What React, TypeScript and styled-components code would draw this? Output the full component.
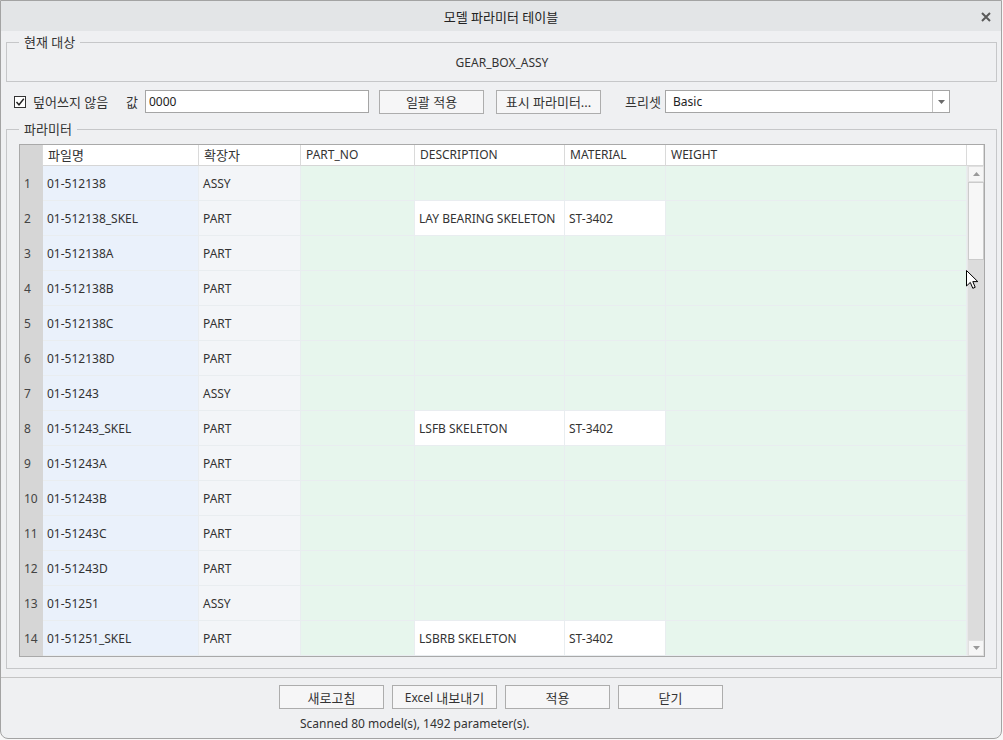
import styled, { createGlobalStyle } from 'styled-components'

const GlobalStyle = createGlobalStyle`
  html, body {
    margin: 0;
    padding: 0;
    background: #f7f7f7;
  }
  body {
    font-family: "Noto Sans", "Noto Sans CJK KR", sans-serif;
    font-size: 12px;
    color: #333;
  }
  * { box-sizing: border-box; }
`

type Tone = 'num' | 'name' | 'ext' | 'param' | 'filled'

interface Row {
  name: string
  ext: string
  desc?: string
  material?: string
}

const rows: Row[] = [
  { name: '01-512138', ext: 'ASSY' },
  { name: '01-512138_SKEL', ext: 'PART', desc: 'LAY BEARING SKELETON', material: 'ST-3402' },
  { name: '01-512138A', ext: 'PART' },
  { name: '01-512138B', ext: 'PART' },
  { name: '01-512138C', ext: 'PART' },
  { name: '01-512138D', ext: 'PART' },
  { name: '01-51243', ext: 'ASSY' },
  { name: '01-51243_SKEL', ext: 'PART', desc: 'LSFB SKELETON', material: 'ST-3402' },
  { name: '01-51243A', ext: 'PART' },
  { name: '01-51243B', ext: 'PART' },
  { name: '01-51243C', ext: 'PART' },
  { name: '01-51243D', ext: 'PART' },
  { name: '01-51251', ext: 'ASSY' },
  { name: '01-51251_SKEL', ext: 'PART', desc: 'LSBRB SKELETON', material: 'ST-3402' },
]

const headers = ['', '파일명', '확장자', 'PART_NO', 'DESCRIPTION', 'MATERIAL', 'WEIGHT', '']
const koreanHeader = /[가-힣]/

function App () {
  return (
    <>
      <GlobalStyle />
      <Window>
        <TitleBar>
          <Title>모델 파라미터 테이블</Title>
          <CloseButton>
            <svg width="10" height="10" viewBox="0 0 10 10">
              <path d="M1 1 L9 9 M9 1 L1 9" stroke="#5a5a5a" strokeWidth="2" />
            </svg>
          </CloseButton>
        </TitleBar>

        <Body>
          <Group>
            <Legend>현재 대상</Legend>
            <TargetName>GEAR_BOX_ASSY</TargetName>
          </Group>

          <Options>
            <CheckLabel>
              <CheckBox>
                <svg width="10" height="10" viewBox="0 0 10 10">
                  <path d="M1.5 5 L4 7.8 L8.8 1.8" stroke="#222" strokeWidth="1.4" fill="none" />
                </svg>
              </CheckBox>
              <Ko>덮어쓰지 않음</Ko>
            </CheckLabel>
            <FieldLabel $width={19}>값</FieldLabel>
            <TextInput $width={224}>0000</TextInput>
            <Button $width={105} $gap={10}><Ko>일괄 적용</Ko></Button>
            <Button $width={105} $gap={12}><Ko>표시 파라미터...</Ko></Button>
            <FieldLabel $width={40} $gap={24}>프리셋</FieldLabel>
            <Select>
              <SelectValue>Basic</SelectValue>
              <SelectArrow>
                <svg width="7" height="4" viewBox="0 0 7 4">
                  <path d="M0 0 L7 0 L3.5 4 Z" fill="#6a6a6a" />
                </svg>
              </SelectArrow>
            </Select>
          </Options>

          <Group $grow>
            <Legend>파라미터</Legend>
            <TableFrame>
              {headers.map((h, i) => (
                <HeadCell key={'h' + i} $corner={i === 0}>
                  {koreanHeader.test(h) ? <Ko>{h}</Ko> : h}
                </HeadCell>
              ))}
              <ScrollBar>
                <ScrollButton>
                  <svg width="7" height="4" viewBox="0 0 7 4">
                    <path d="M0 4 L7 4 L3.5 0 Z" fill="#9a9a9a" />
                  </svg>
                </ScrollButton>
                <Thumb />
                <Track />
                <ScrollButton>
                  <svg width="7" height="4" viewBox="0 0 7 4">
                    <path d="M0 0 L7 0 L3.5 4 Z" fill="#9a9a9a" />
                  </svg>
                </ScrollButton>
              </ScrollBar>
              {rows.map((r, i) => (
                <RowCells key={r.name} index={i + 1} row={r} />
              ))}
            </TableFrame>
          </Group>
        </Body>

        <Footer>
          <ButtonRow>
            <Button $width={105}><Ko>새로고침</Ko></Button>
            <Button $width={105}>Excel&nbsp;<Ko>내보내기</Ko></Button>
            <Button $width={105}><Ko>적용</Ko></Button>
            <Button $width={105}><Ko>닫기</Ko></Button>
          </ButtonRow>
          <Status>Scanned 80 model(s), 1492 parameter(s).</Status>
        </Footer>

        <Cursor width="13" height="20" viewBox="0 0 13 20">
          <path d="M0.5 0.5 L0.5 16 L4.3 12.4 L6.8 18.3 L9.2 17.3 L6.8 11.6 L11.8 11.6 Z" fill="#fff" stroke="#000" strokeWidth="1" strokeLinejoin="round" />
        </Cursor>
      </Window>
    </>
  )
}

function RowCells ({ index, row }: { index: number, row: Row }) {
  return (
    <>
      <Cell $tone="num">{index}</Cell>
      <Cell $tone="name">{row.name}</Cell>
      <Cell $tone="ext">{row.ext}</Cell>
      <Cell $tone="param" />
      <Cell $tone={row.desc ? 'filled' : 'param'}>{row.desc}</Cell>
      <Cell $tone={row.material ? 'filled' : 'param'}>{row.material}</Cell>
      <Cell $tone="param" />
    </>
  )
}

const toneBg: Record<Tone, string> = {
  num: '#d6d6d6',
  name: '#eaf1fb',
  ext: '#f3f5f8',
  param: '#e7f6ed',
  filled: '#ffffff',
}

const Ko = styled.span`
  font-size: 13px;
`

const Window = styled.div`
  position: relative;
  width: 1002px;
  height: 739px;
  background: #eff0f2;
  border: 1px solid #a3a3a3;
  border-radius: 0 0 8px 8px;
  display: flex;
  flex-direction: column;
  overflow: hidden;
`

const TitleBar = styled.div`
  height: 30px;
  flex: none;
  background: #e3e5e7;
  display: flex;
  align-items: center;
  justify-content: center;
  position: relative;
`

const Title = styled.div`
  font-size: 13px;
  color: #222;
`

const CloseButton = styled.div`
  position: absolute;
  right: 10px;
  top: 11px;
  display: flex;
`

const Body = styled.div`
  flex: 1;
  display: flex;
  flex-direction: column;
  padding: 3px 4px 0 5px;
  min-height: 0;
`

const Group = styled.fieldset<{ $grow?: boolean }>`
  margin: 0;
  padding: 0 11px 0 12px;
  border: 1px solid #c6c7c9;
  min-width: 0;
  ${p => p.$grow ? 'flex: 1; margin-top: 8px; padding-top: 7px; padding-bottom: 11px;' : ''}
`

const Legend = styled.legend`
  margin-left: 0;
  padding: 0 5px;
  font-size: 13px;
  line-height: 16px;
  color: #333;
`

const TargetName = styled.div`
  text-align: center;
  line-height: 18px;
  padding: 4px 0 9px;
  color: #333;
`

const Options = styled.div`
  display: flex;
  align-items: center;
  height: 23px;
  margin-top: 8px;
  padding-left: 8px;
`

const CheckLabel = styled.div`
  width: 112px;
  display: flex;
  align-items: center;
  gap: 7px;
  color: #333;
`

const CheckBox = styled.span`
  width: 12px;
  height: 12px;
  flex: none;
  border: 1px solid #333;
  background: #fff;
  display: flex;
  align-items: center;
  justify-content: center;
`

const FieldLabel = styled.span<{ $width: number, $gap?: number }>`
  width: ${p => p.$width}px;
  flex: none;
  margin-left: ${p => p.$gap ?? 0}px;
  font-size: 13px;
  color: #333;
  white-space: nowrap;
`

const TextInput = styled.div<{ $width: number }>`
  width: ${p => p.$width}px;
  height: 23px;
  background: #fff;
  border: 1px solid #a5a5a5;
  padding-left: 3px;
  line-height: 21px;
  color: #222;
`

const Button = styled.div<{ $width: number, $gap?: number }>`
  width: ${p => p.$width}px;
  height: 24px;
  margin-left: ${p => p.$gap ?? 0}px;
  background: #f6f6f7;
  border: 1px solid #adadad;
  display: flex;
  align-items: center;
  justify-content: center;
  color: #333;
  white-space: nowrap;
`

const Select = styled.div`
  width: 285px;
  height: 23px;
  background: #fff;
  border: 1px solid #a5a5a5;
  display: flex;
`

const SelectValue = styled.div`
  flex: 1;
  padding-left: 7px;
  line-height: 21px;
  color: #222;
`

const SelectArrow = styled.div`
  width: 17px;
  border-left: 1px solid #c3c3c3;
  display: flex;
  align-items: center;
  justify-content: center;
`

const TableFrame = styled.div`
  display: grid;
  grid-template-columns: 23px 156px 102px 114px 150px 101px 301px 17px;
  grid-template-rows: 21px repeat(14, 35px);
  border: 1px solid #a9a9a9;
  background: #fff;
`

const HeadCell = styled.div<{ $corner?: boolean }>`
  background: ${p => p.$corner ? '#d6d6d6' : '#fff'};
  border-right: 1px solid #dadada;
  border-bottom: 1px solid #d6d6d6;
  padding-left: 5px;
  line-height: 20px;
  color: #333;
  white-space: nowrap;
`

const Cell = styled.div<{ $tone: Tone }>`
  background: ${p => toneBg[p.$tone]};
  border-right: 1px solid ${p => p.$tone === 'num' ? '#d6d6d6' : '#e9edf0'};
  border-bottom: 1px solid ${p => p.$tone === 'num' ? '#d6d6d6' : '#e9edf0'};
  padding-left: 4px;
  display: flex;
  align-items: center;
  color: ${p => p.$tone === 'num' ? '#444' : '#333'};
  white-space: nowrap;
`

const ScrollBar = styled.div`
  grid-column: 8;
  grid-row: 2 / span 14;
  display: flex;
  flex-direction: column;
  background: #dcdcdc;
  border-left: 1px solid #e8e8e8;
`

const ScrollButton = styled.div`
  height: 16px;
  flex: none;
  background: #f6f6f6;
  border: 1px solid #e0e0e0;
  display: flex;
  align-items: center;
  justify-content: center;
`

const Thumb = styled.div`
  height: 78px;
  flex: none;
  background: #f7f7f7;
  border: 1px solid #cbcbcb;
`

const Track = styled.div`
  flex: 1;
`

const Footer = styled.div`
  flex: none;
  height: 61px;
  margin-top: 8px;
  border-top: 1px solid #c4c4c4;
  display: flex;
  flex-direction: column;
`

const ButtonRow = styled.div`
  display: flex;
  justify-content: center;
  gap: 8px;
  margin-top: 7px;
`

const Status = styled.div`
  padding-left: 299px;
  margin-top: 6px;
  line-height: 18px;
  color: #333;
`

const Cursor = styled.svg`
  position: absolute;
  left: 965px;
  top: 269px;
`

export default App
